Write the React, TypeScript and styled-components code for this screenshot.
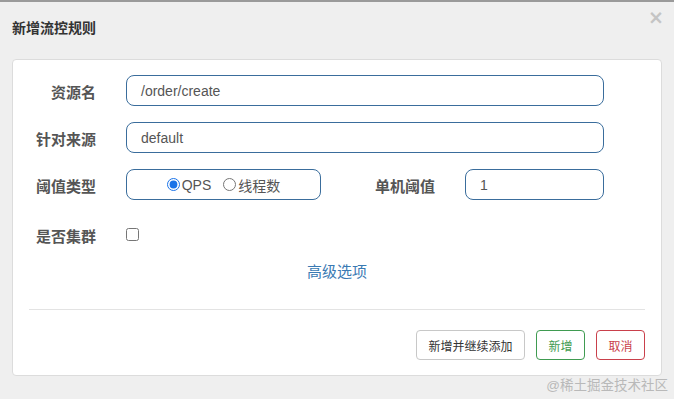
import React from "react";
import styled, { createGlobalStyle } from "styled-components";

const GlobalStyle = createGlobalStyle`
    html, body {
        margin: 0;
        padding: 0;
        background: #efefef;
        font-family: "Liberation Sans", "Noto Sans CJK SC", sans-serif;
    }
`;

const Page = styled.div`
    width: 674px;
    height: 399px;
    border-top: 2px solid #9a9a9a;
    box-sizing: border-box;
    background: #efefef;
    display: flex;
    flex-direction: column;
`;

const Header = styled.div`
    height: 57px;
    display: flex;
    justify-content: space-between;
    align-items: flex-start;
    padding: 0 10px 0 12px;
`;

const Title = styled.h4`
    margin: 16px 0 0;
    font-size: 14px;
    line-height: 20px;
    font-weight: bold;
    color: #333;
`;

const Close = styled.span`
    margin-top: 5px;
    font-size: 19px;
    line-height: 20px;
    font-weight: bold;
    color: #c4c4c4;
    font-family: "DejaVu Sans", sans-serif;
`;

const Card = styled.div`
    margin: 0 12px;
    height: 317px;
    box-sizing: border-box;
    background: #fff;
    border: 1px solid #dcdcdc;
    border-radius: 4px;
    display: flex;
    flex-direction: column;
    padding: 15px 16px 15px 0;
`;

const Row = styled.div<{ gap?: number }>`
    display: flex;
    align-items: center;
    margin-bottom: ${({ gap }) => (gap ?? 16)}px;
`;

const Label = styled.label<{ width?: number }>`
    width: ${({ width }) => width ?? 83}px;
    flex-shrink: 0;
    text-align: right;
    margin-right: 30px;
    padding-top: 2px;
    font-size: 15px;
    font-weight: bold;
    color: #555;
`;

const TextInput = styled.div<{ width?: number }>`
    width: ${({ width }) => width ?? 478}px;
    height: 31px;
    box-sizing: border-box;
    border: 1px solid #3a6d9c;
    border-radius: 8px;
    padding-left: 14px;
    display: flex;
    align-items: center;
    font-size: 14px;
    color: #555;
`;

const RadioBox = styled.div`
    width: 195px;
    height: 31px;
    box-sizing: border-box;
    border: 1px solid #3a6d9c;
    border-radius: 8px;
    display: flex;
    align-items: center;
    justify-content: center;
    gap: 12px;
    margin-right: 52px;
    font-size: 14px;
    color: #555;
`;

const RadioOption = styled.label`
    display: flex;
    align-items: center;
    gap: 2px;
`;

const Radio = styled.input`
    width: 13px;
    height: 13px;
    margin: 0;
    accent-color: #1a73e8;
`;

const Check = styled.input`
    width: 13px;
    height: 13px;
    margin: 0;
`;

const CheckRow = styled.div`
    display: flex;
    align-items: center;
    height: 31px;
    margin-top: 19px;
`;

const Advanced = styled.a`
    align-self: center;
    margin: 11px 0 0 16px;
    font-size: 15px;
    line-height: 22px;
    color: #3a7ab3;
    cursor: pointer;
`;

const Divider = styled.hr`
    margin: 26px 0 0 16px;
    border: 0;
    border-top: 1px solid #e3e3e3;
`;

const Footer = styled.div`
    margin-top: auto;
    display: flex;
    justify-content: flex-end;
    gap: 11px;
`;

const Button = styled.button<{ tone?: "default" | "success" | "danger" }>`
    height: 30px;
    padding: 0 11.5px;
    background: #fff;
    border-radius: 4px;
    font-family: "Liberation Sans", "Noto Sans CJK SC", sans-serif;
    font-size: 12px;
    border: 1px solid
        ${({ tone }) => (tone === "success" ? "#3f9b51" : tone === "danger" ? "#c9404b" : "#c8c8c8")};
    color: ${({ tone }) => (tone === "success" ? "#3f9b51" : tone === "danger" ? "#c9404b" : "#333")};
`;

const Watermark = styled.div`
    display: flex;
    justify-content: flex-end;
    padding-right: 6px;
    font-size: 13.5px;
    line-height: 20px;
    color: #b9b9b9;
`;

export default function App() {
    return (
        <>
            <GlobalStyle />
            <Page>
                <Header>
                    <Title>新增流控规则</Title>
                    <Close>×</Close>
                </Header>
                <Card>
                    <Row>
                        <Label>资源名</Label>
                        <TextInput>/order/create</TextInput>
                    </Row>
                    <Row>
                        <Label>针对来源</Label>
                        <TextInput>default</TextInput>
                    </Row>
                    <Row gap={0}>
                        <Label>阈值类型</Label>
                        <RadioBox>
                            <RadioOption>
                                <Radio type="radio" name="grade" defaultChecked />
                                QPS
                            </RadioOption>
                            <RadioOption>
                                <Radio type="radio" name="grade" />
                                线程数
                            </RadioOption>
                        </RadioBox>
                        <Label width={62}>单机阈值</Label>
                        <TextInput width={139}>1</TextInput>
                    </Row>
                    <CheckRow>
                        <Label>是否集群</Label>
                        <Check type="checkbox" />
                    </CheckRow>
                    <Advanced>高级选项</Advanced>
                    <Divider />
                    <Footer>
                        <Button>新增并继续添加</Button>
                        <Button tone="success">新增</Button>
                        <Button tone="danger">取消</Button>
                    </Footer>
                </Card>
                <Watermark>@稀土掘金技术社区</Watermark>
            </Page>
        </>
    );
}
